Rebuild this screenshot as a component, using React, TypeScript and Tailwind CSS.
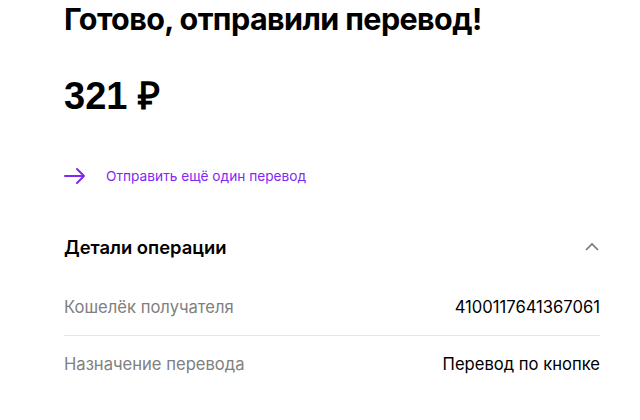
export default function App() {
  return (
    <div className="min-h-[420px] w-[640px] bg-white pl-16 pr-10 font-['Inter',sans-serif] text-[#000]">
      <h1 className="pt-px text-[30.5px] font-bold leading-[36px] tracking-[-0.6px]">Готово, отправили перевод!</h1>
      <div className="mt-[37px] font-['Liberation_Sans',sans-serif] text-[38px] font-bold leading-[44px]">321 ₽</div>
      <a href="#" className="mt-[48px] flex items-center gap-5 text-[13.7px] text-[#7f2af2]">
        <svg width="22" height="18" viewBox="0 0 22 18" fill="none" stroke="#7f2af2" strokeWidth="2" strokeLinecap="round" strokeLinejoin="round">
          <path d="M1 9h19M13 2l7 7-7 7" />
        </svg>
        <span>Отправить ещё один перевод</span>
      </a>
      <div className="mt-[48px] flex items-center justify-between">
        <h2 className="text-[18.4px] font-semibold leading-6">Детали операции</h2>
        <svg width="16" height="10" viewBox="0 0 16 10" fill="none" stroke="#777" strokeWidth="1.6">
          <path d="M2 8l6-6 6 6" />
        </svg>
      </div>
      <div className="mt-[36px] flex items-center justify-between pb-[16px] text-[16.6px] leading-6">
        <span className="text-[#808080]">Кошелёк получателя</span>
        <span>4100117641367061</span>
      </div>
      <div className="h-px bg-[#e6e6e6]" />
      <div className="flex items-center justify-between pt-[16px] text-[16.6px] leading-6">
        <span className="text-[#808080]">Назначение перевода</span>
        <span>Перевод по кнопке</span>
      </div>
    </div>
  );
}
